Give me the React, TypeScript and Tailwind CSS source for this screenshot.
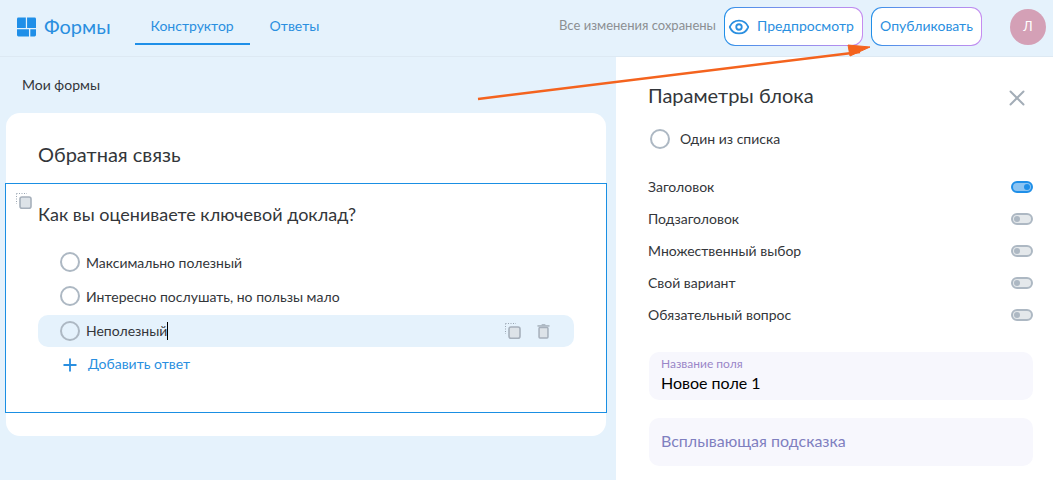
import { Eye, Plus, X } from "lucide-react";

function CopyIcon({ className }: { className?: string }) {
  return (
    <svg viewBox="0 0 16 16" className={className} fill="none">
      <path d="M0.5 0.5H11M0.5 0.5V11" stroke="#9aa6b2" strokeWidth="1" strokeDasharray="1 1.5" />
      <rect x="4" y="4" width="11" height="11.2" rx="2" fill="#dde3e8" stroke="#a6b0bb" strokeWidth="1.6" />
    </svg>
  );
}

function TrashIcon({ className }: { className?: string }) {
  return (
    <svg viewBox="0 0 14 16" className={className} fill="none">
      <path d="M0.5 2h13" stroke="#a6b0bb" strokeWidth="1.6" />
      <path d="M5 0.7h4" stroke="#a6b0bb" strokeWidth="1.2" />
      <rect x="2.2" y="3.8" width="9.6" height="11.2" rx="1" fill="#dde3e8" stroke="#a6b0bb" strokeWidth="1.6" />
    </svg>
  );
}

function Radio() {
  return <span className="block w-5 h-5 shrink-0 rounded-full border-2 border-[#adb8c3]" />;
}

function GradientButton({ children, className }: { children: React.ReactNode; className?: string }) {
  return (
    <div className={"rounded-[11px] p-px bg-gradient-to-r from-[#1f8fe8] to-[#c58cf0] " + (className ?? "")}>
      <div className="h-full rounded-[10px] bg-white flex items-center text-[#2a8fe0] text-[14px]">{children}</div>
    </div>
  );
}

function Toggle({ on, label }: { on?: boolean; label: string }) {
  return (
    <div className="h-8 flex items-center justify-between">
      <span className="pb-0.5 text-[14px] text-[#33363a]">{label}</span>
      <span
        className={
          "w-[22px] h-3 rounded-full border-2 flex items-center " +
          (on ? "bg-[#8cc4f2] border-[#1f8fe8] justify-end" : "bg-[#e4e8eb] border-[#adb8c3] justify-start")
        }
      >
        <span className={"w-1.5 h-1.5 mx-px rounded-full " + (on ? "bg-[#1f8fe8]" : "bg-[#adb8c3]")} />
      </span>
    </div>
  );
}

function Answer({ text }: { text: string }) {
  return (
    <div className="h-8 flex items-center gap-1.5 pl-[54px]">
      <Radio />
      <span className="text-[14px] text-[#33363a]">{text}</span>
    </div>
  );
}

export default function App() {
  return (
    <div className="relative w-[1053px] h-[480px] overflow-hidden bg-[#e5f2fc] font-['Lato',sans-serif]">
      {/* Header */}
      <header className="h-[57px] flex items-center border-b border-[#dde9f3] pl-[17px] pr-[7px] pb-[3px]">
        <svg viewBox="0 0 20 20" className="w-[19px] h-5 text-[#1f8fe8] shrink-0" fill="currentColor">
          <path d="M1.5 0H9.3V11H0V1.5A1.5 1.5 0 0 1 1.5 0Z" />
          <path d="M10.6 0H18.5A1.5 1.5 0 0 1 20 1.5V11H10.6Z" />
          <path d="M0 12.4H12.6V20H1.5A1.5 1.5 0 0 1 0 18.5Z" />
          <path d="M14 12.4H20V18.5A1.5 1.5 0 0 1 18.5 20H14Z" />
        </svg>
        <span className="ml-2 pb-0.5 text-[20px] text-[#2a8fe0]">Формы</span>
        <nav className="ml-[24px] h-[45px] self-start flex text-[14px] text-[#2a8fe0]">
          <div className="w-[115px] h-[45px] flex items-center justify-center border-b-2 border-[#1f8fe8] pt-[7px]">Конструктор</div>
          <div className="ml-5 h-[43px] flex items-center pt-[7px]">Ответы</div>
        </nav>
        <span className="ml-auto pb-0.5 text-[13px] text-[#8c8f92]">Все изменения сохранены</span>
        <GradientButton className="ml-2 w-[139px] h-[39px]">
          <Eye className="ml-[3px] w-[22px] h-[22px]" strokeWidth={2} />
          <span className="ml-[7px] pb-0.5">Предпросмотр</span>
        </GradientButton>
        <GradientButton className="ml-2 w-[111px] h-[39px]">
          <span className="w-full pb-0.5 text-center">Опубликовать</span>
        </GradientButton>
        <div className="ml-[28px] w-9 h-9 rounded-full bg-[#d4a0b6] flex items-center justify-center text-white text-[13px]">Л</div>
      </header>

      <div className="flex h-[423px]">
        {/* Left side */}
        <main className="w-[616px] shrink-0">
          <div className="h-[56px] pl-[22px] pt-5 text-[14px] leading-[16px] text-[#33363a]">Мои формы</div>
          <section className="ml-1.5 w-[600px] h-[323px] bg-white rounded-[14px] pt-[29px]">
            <h2 className="pl-8 h-[41px] text-[20px] leading-[24px] text-[#33363a]">Обратная связь</h2>
            <div className="relative -ml-px w-[602px] h-[230px] border border-[#1a8fe3]">
              <CopyIcon className="absolute left-[10px] top-[9px] w-[16px] h-[16px]" />
              <h3 className="pl-8 pt-[18px] h-[62px] text-[18px] leading-[24px] text-[#33363a]">Как вы оцениваете ключевой доклад?</h3>
              <Answer text="Максимально полезный" />
              <div className="mt-0.5">
                <Answer text="Интересно послушать, но пользы мало" />
              </div>
              <div className="mt-[3px] ml-8 w-[536px] h-8 pr-[24px] rounded-[10px] bg-[#e5f2fc] flex items-center">
                <span className="ml-[22px]">
                  <Radio />
                </span>
                <span className="ml-1.5 text-[14px] text-[#33363a] border-r border-black leading-[18px]">Неполезный</span>
                <CopyIcon className="ml-auto w-[16px] h-[16px]" />
                <TrashIcon className="ml-[16px] w-[13px] h-[15px]" />
              </div>
              <div className="ml-[54px] h-8 flex items-center text-[14px] text-[#2a8fe0]">
                <Plus className="w-5 h-5 mt-1" strokeWidth={2.2} />
                <span className="ml-2">Добавить ответ</span>
              </div>
            </div>
          </section>
        </main>

        {/* Block settings panel */}
        <aside className="flex-1 bg-white pl-8 pr-5">
          <div className="h-[70px] pt-[26px] flex justify-between items-start">
            <span className="text-[20px] leading-[24px] text-[#33363a]">Параметры блока</span>
            <X className="mt-0.5 mr-[3px] w-[26px] h-[26px] text-[#a3adb7]" strokeWidth={1.8} />
          </div>
          <div className="h-6 flex items-center gap-[10px] pl-0.5">
            <Radio />
            <span className="pb-0.5 text-[14px] text-[#33363a]">Один из списка</span>
          </div>
          <div className="mt-5">
            <Toggle on label="Заголовок" />
            <Toggle label="Подзаголовок" />
            <Toggle label="Множественный выбор" />
            <Toggle label="Свой вариант" />
            <Toggle label="Обязательный вопрос" />
          </div>
          <div className="mt-[21px] ml-px h-12 rounded-[10px] bg-[#f7f7fd] pl-3 pt-[5px]">
            <div className="text-[12px] leading-[14px] text-[#9a86c8]">Название поля</div>
            <div className="mt-0.5 text-[16px] leading-[20px] text-black">Новое поле 1</div>
          </div>
          <div className="mt-[18px] ml-px h-12 rounded-[10px] bg-[#f7f7fd] pl-3 pb-0.5 flex items-center text-[16px] text-[#7f7fc0]">Всплывающая подсказка</div>
        </aside>
      </div>

      {/* Annotation arrow */}
      <svg className="absolute left-0 top-0 w-[1053px] h-[480px] pointer-events-none" viewBox="0 0 1053 480" fill="none">
        <path d="M478 99L860 52" stroke="#f4631e" strokeWidth="2.5" />
        <path d="M870 47L848 45L850 56Z" fill="#f4631e" stroke="#f4631e" />
      </svg>
    </div>
  );
}
